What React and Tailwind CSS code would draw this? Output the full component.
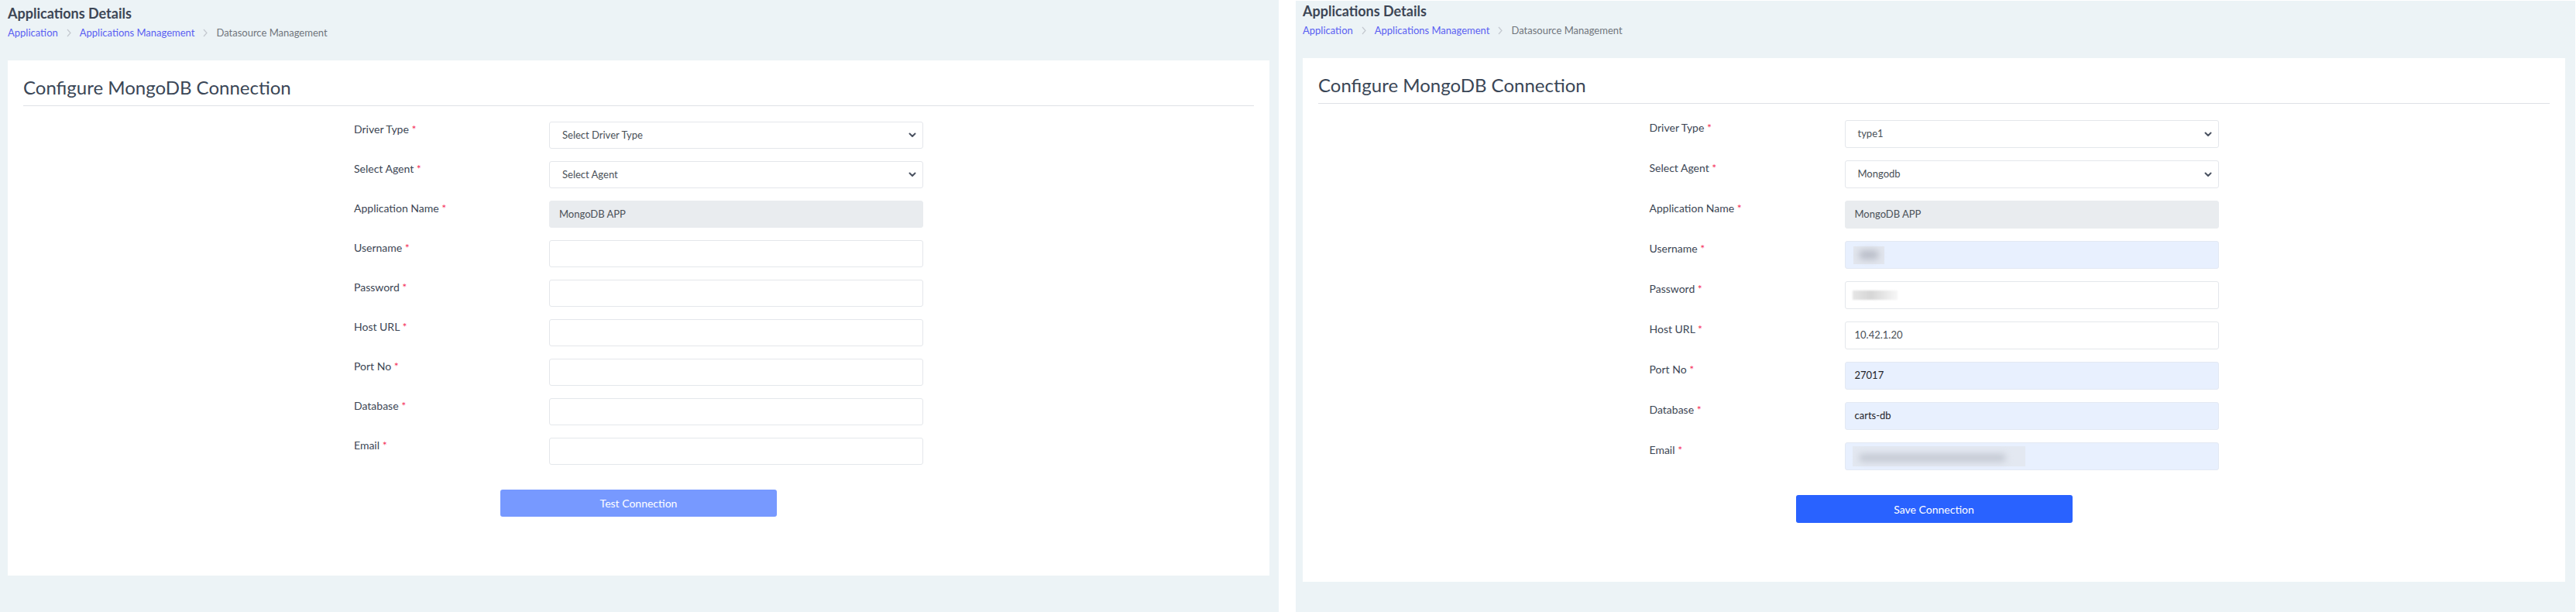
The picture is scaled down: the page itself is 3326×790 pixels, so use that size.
import React from 'react';

const Chevron = () => (
  <svg width="10" height="7" viewBox="0 0 10 7" className="shrink-0">
    <polyline points="1.5,1.5 5,5 8.5,1.5" fill="none" stroke="#4a5261" strokeWidth="2" strokeLinecap="round" strokeLinejoin="round" />
  </svg>
);

const Crumb = () => (
  <svg width="6" height="11" viewBox="0 0 6 11" className="mx-[11px]">
    <polyline points="1,1 5,5.5 1,10" fill="none" stroke="#c3c8cf" strokeWidth="1.2" />
  </svg>
);

const Label = ({ children }) => (
  <div className="w-[252px] shrink-0 text-[14px] leading-[20px] text-[#3c4654]">
    {children} <span className="text-[#f5325c]">*</span>
  </div>
);

const SelectBox = ({ value, h }) => (
  <div className={`flex-1 ${h} flex items-center justify-between pl-[16px] pr-[8px] bg-white border border-[#e4e7eb] rounded-[3px] text-[13px] text-[#495057]`}>
    <span>{value}</span>
    <Chevron />
  </div>
);

const TextBox = ({ value, h, tone = 'white', children }) => {
  const bg = tone === 'disabled' ? 'bg-[#e9ecef] border-[#e9ecef]' : tone === 'fill' ? 'bg-[#e8f0fe] border-[#e3e9f3]' : 'bg-white border-[#e4e7eb]';
  const color = tone === 'fill' ? 'text-[#1f2328]' : 'text-[#495057]';
  return (
    <div className={`flex-1 ${h} flex items-center pl-[12px] border rounded-[3px] text-[13px] ${bg} ${color}`}>
      {value}
      {children}
    </div>
  );
};

const Row = ({ label, children }) => (
  <div className="flex mb-[16px]">
    <Label>{label}</Label>
    {children}
  </div>
);

const Panel = ({ filled }) => {
  const h = filled ? 'h-[36px]' : 'h-[35px]';
  return (
    <div className={`h-full bg-[#ecf3f6] ${filled ? 'w-[1652px] mt-px pl-[9px] pr-[13px]' : 'w-[1651px] pl-[10px] pr-[12px]'}`}>
      <div className={filled ? 'pt-[1px]' : 'pt-[5px]'}>
        <h1 className="text-[18px] leading-[24px] font-bold text-[#3d4655]">Applications Details</h1>
        <div className="flex items-center mt-[4px] text-[13px] leading-[18px]">
          <span className="text-[#5a5ff2]">Application</span>
          <Crumb />
          <span className="text-[#5a5ff2]">Applications Management</span>
          <Crumb />
          <span className="text-[#70757c]">Datasource Management</span>
        </div>
      </div>

      {/* Card */}
      <div className={`bg-white px-[20px] pt-[20px] ${filled ? 'mt-[27px] h-[676px]' : 'mt-[27px] h-[665px]'}`}>
        <h2 className="text-[24px] leading-[30px] text-[#3a4656] pb-[8px] border-b border-[#dfe1e6]">
          Configure MongoDB Connection
        </h2>

        <div className={`w-[735px] mx-auto ${filled ? 'mt-[21px]' : 'mt-[20px]'}`}>
          <Row label="Driver Type">
            <SelectBox h={h} value={filled ? 'type1' : 'Select Driver Type'} />
          </Row>
          <Row label="Select Agent">
            <SelectBox h={h} value={filled ? 'Mongodb' : 'Select Agent'} />
          </Row>
          <Row label="Application Name">
            <TextBox h={h} tone="disabled" value="MongoDB APP" />
          </Row>
          <Row label="Username">
            {filled ? (
              <TextBox h={h} tone="fill">
                <div className="-ml-[2px] w-[40px] h-[23px] bg-[#e2e6ee] flex items-center justify-center">
                  <div className="w-[26px] h-[12px] rounded-full bg-[#b9bdc8] blur-[4px]" />
                </div>
              </TextBox>
            ) : (
              <TextBox h={h} />
            )}
          </Row>
          <Row label="Password">
            {filled ? (
              <TextBox h={h}>
                <div className="-ml-[3px] w-[58px] h-[12px] bg-[linear-gradient(90deg,#e6e6e6,#d6d6d6_40%,#f7f7f7)] blur-[1px]" />
              </TextBox>
            ) : (
              <TextBox h={h} />
            )}
          </Row>
          <Row label="Host URL">
            <TextBox h={h} value={filled ? '10.42.1.20' : ''} />
          </Row>
          <Row label="Port No">
            {filled ? <TextBox h={h} tone="fill" value="27017" /> : <TextBox h={h} />}
          </Row>
          <Row label="Database">
            {filled ? <TextBox h={h} tone="fill" value="carts-db" /> : <TextBox h={h} />}
          </Row>
          <Row label="Email">
            {filled ? (
              <TextBox h={h} tone="fill">
                <div className="-ml-[3px] w-[223px] h-[26px] bg-[#e3e8f1] flex items-center pl-[8px]">
                  <div className="w-[190px] h-[10px] mt-[4px] rounded-full bg-[#c3c8d2] blur-[4px]" />
                </div>
              </TextBox>
            ) : (
              <TextBox h={h} />
            )}
          </Row>
        </div>

        <div className="flex justify-center pt-[16px]">
          <button
            className={`w-[357px] ${h} rounded-[3px] text-[14px] text-white ${filled ? 'bg-[#2962ff]' : 'bg-[#7799ff]'}`}
          >
            {filled ? 'Save Connection' : 'Test Connection'}
          </button>
        </div>
      </div>
    </div>
  );
};

export default function App() {
  return (
    <div className="flex w-[3326px] h-[790px] bg-white overflow-hidden font-['Lato',sans-serif]">
      <Panel />
      <div className="w-[22px] shrink-0" />
      <Panel filled />
    </div>
  );
}
